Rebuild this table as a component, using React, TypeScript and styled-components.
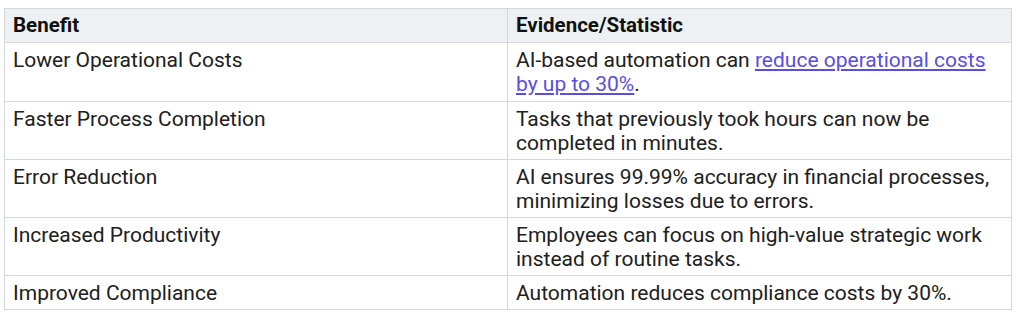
import React from 'react'
import styled, { createGlobalStyle } from 'styled-components'

const GlobalStyle = createGlobalStyle`
  body {
    margin: 0;
    background: #ffffff;
    font-family: Roboto, "Liberation Sans", Arial, sans-serif;
  }
`

const Wrapper = styled.div`
  padding: 8px 9px 0 4px;
`

const Table = styled.table`
  width: 100%;
  border-collapse: collapse;
  table-layout: fixed;
  font-size: 21px;
  line-height: 24px;
  color: #202020;
`

const HeadCell = styled.th`
  background: #eef1f4;
  border: 1px solid #d3d7db;
  padding: 4px 8px 5px;
  text-align: left;
  font-weight: 700;
  font-size: 20.5px;
  color: #111111;
`

const Cell = styled.td<{ $tall?: boolean }>`
  border: 1px solid #d3d7db;
  padding: 5px 8px ${({ $tall }) => ($tall ? '5px' : '4px')};
  vertical-align: top;
`

const Link = styled.a`
  color: #5a4ee0;
  text-decoration: underline;
  text-underline-offset: 2px;
`

type Row = { benefit: string; evidence: React.ReactNode; link?: boolean }

const rows: Row[] = [
  {
    benefit: 'Lower Operational Costs',
    link: true,
    evidence: (
      <>
        AI-based automation can <Link href="#">reduce operational costs by up to 30%</Link>.
      </>
    ),
  },
  {
    benefit: 'Faster Process Completion',
    evidence: 'Tasks that previously took hours can now be completed in minutes.',
  },
  {
    benefit: 'Error Reduction',
    evidence: 'AI ensures 99.99% accuracy in financial processes, minimizing losses due to errors.',
  },
  {
    benefit: 'Increased Productivity',
    evidence: 'Employees can focus on high-value strategic work instead of routine tasks.',
  },
  {
    benefit: 'Improved Compliance',
    evidence: 'Automation reduces compliance costs by 30%.',
  },
]

export default function App() {
  return (
    <>
      <GlobalStyle />
      <Wrapper>
        <Table>
          <colgroup>
            <col style={{ width: '503px' }} />
            <col />
          </colgroup>
          <thead>
            <tr>
              <HeadCell>Benefit</HeadCell>
              <HeadCell>Evidence/Statistic</HeadCell>
            </tr>
          </thead>
          <tbody>
            {rows.map((r) => (
              <tr key={r.benefit}>
                <Cell $tall={r.link}>{r.benefit}</Cell>
                <Cell $tall={r.link}>{r.evidence}</Cell>
              </tr>
            ))}
          </tbody>
        </Table>
      </Wrapper>
    </>
  )
}
